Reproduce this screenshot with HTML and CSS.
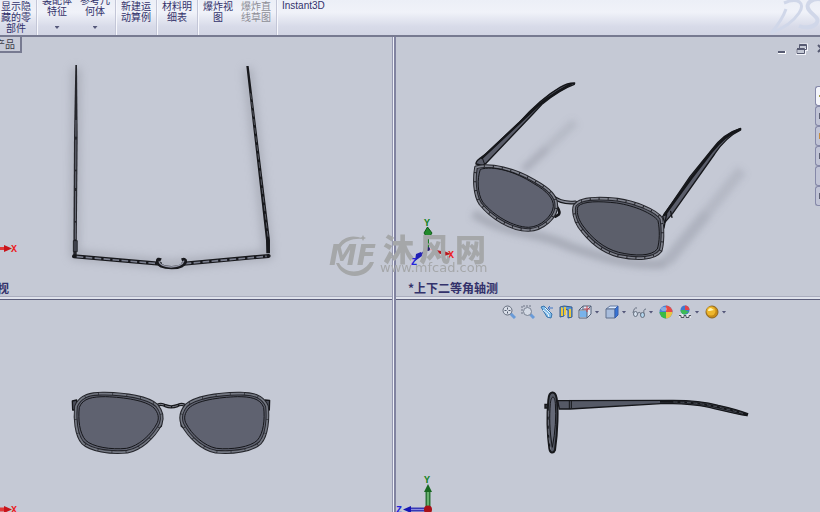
FILE: index.html
```
<!DOCTYPE html>
<html lang="zh-CN">
<head>
<meta charset="utf-8">
<title>装配体</title>
<link rel="stylesheet" href="styles.css">
</head>
<body>
<header class="ribbon">
  <div class="group"><button class="tool">显示隐<br>藏的零<br>部件</button></div>
  <div class="group">
    <button class="tool tall">装配体<br>特征<i class="caret"></i></button>
    <button class="tool tall">参考几<br>何体<i class="caret"></i></button>
  </div>
  <div class="group"><button class="tool">新建运<br>动算例</button></div>
  <div class="group"><button class="tool">材料明<br>细表</button></div>
  <div class="group">
    <button class="tool">爆炸视<br>图</button>
    <button class="tool" disabled>爆炸直<br>线草图</button>
  </div>
  <div class="group"><button class="tool latin">Instant3D</button></div>
  <svg class="brand" viewBox="0 0 50 35" aria-hidden="true">
    <path d="M14 3C28 -3 36 3 29 13C23 22 12 29 1 33C8 25 13 18 16 9" fill="none" stroke="#d0d7e9" stroke-width="3"/>
    <path d="M54 0C43 -3 34 3 39 10C42 15 51 18 46 24C42 28 34 28 29 26" fill="none" stroke="#d0d7e9" stroke-width="4"/>
  </svg>
</header>

<main class="views">
  <section class="view">
    <svg class="model" viewBox="0 37 392 259" aria-hidden="true">
      <defs>
        <filter id="soft" x="-40%" y="-40%" width="180%" height="180%"><feGaussianBlur stdDeviation="14"/></filter>
      </defs>
      <g transform="translate(50 50) scale(.3333)" fill="none">
        <path d="M78 55L74 615L360 645L655 615L593 55" stroke="#8b8f9a" stroke-width="24" opacity=".55" filter="url(#soft)"/>
        <path d="M76 45L81 45L83 260L80 615L70 615L72 260Z" fill="#25262c"/>
        <path d="M78 210L76 570" stroke="#6a6d79" stroke-width="3" stroke-dasharray="50 9 90 5"/>
        <path d="M589 48L596 48L660 570L660 610L649 610L648 570Z" fill="#17181c"/>
        <path d="M602 130L654 560" stroke="#747783" stroke-width="2" stroke-dasharray="18 8"/>
        <path d="M70 572L82 572L82 605L70 605Z" fill="#3f424c" stroke="#15161a" stroke-width="2"/>
        <path d="M72 619L330 641M400 641L656 618" stroke="#17181c" stroke-width="12" stroke-linecap="round"/>
        <path d="M80 620L326 641M404 641L650 619" stroke="#7b7f8e" stroke-width="5" stroke-dasharray="20 7"/>
        <path d="M333 630C318 622 321 640 332 647C350 655 380 655 396 647C408 640 412 624 395 630" stroke="#17181c" stroke-width="10"/>
        <path d="M327 634C330 648 350 650 363 651C383 650 398 647 402 632" stroke="#9295a5" stroke-width="4"/>
      </g>
      <path d="M0 248.500H5" stroke="#e03a3a" stroke-width="3"/>
      <path d="M4 245L12 248.500L4 252Z" fill="#c8141b"/>
      <text x="11" y="252">X</text>
    </svg>
    <div class="doc-tab">产品</div>
    <p class="view-name clipped">视</p>
  </section>

  <section class="view">
    <svg class="model" viewBox="396 37 424 259" aria-hidden="true">
      <defs>
        <filter id="shade" x="-30%" y="-30%" width="160%" height="160%"><feGaussianBlur stdDeviation="10"/></filter>
      </defs>
      <g transform="translate(460 70) scale(.3333)" fill="none" stroke-linejoin="round">
        <g stroke="#8d919d" filter="url(#shade)">
          <path d="M190 300L260 235" stroke-width="24" opacity=".45"/>
          <path d="M260 235L345 155" stroke-width="26" opacity=".25"/>
          <path d="M620 575L740 430" stroke-width="36" opacity=".4"/>
          <path d="M740 430L845 300" stroke-width="34" opacity=".28"/>
          <path d="M40 430C150 500 230 480 330 530C450 570 530 590 620 580" stroke-width="28" opacity=".5"/>
        </g>
        <g stroke-linecap="round">
        <path d="M48 282C45 270 70 260 80 250L175 160C220 110 260 75 300 52Q325 38 344 39L343 43C310 55 280 75 248 101L218 133L78 280L68 286Z" fill="#5a5d6a" stroke="#15161a" stroke-width="4"/>
        <path d="M66 264L205 134Q255 83 332 43" stroke="#15161a" stroke-width="7"/>
        <path d="M67 264L74 283" stroke="#15161a" stroke-width="3"/>
        <path d="M608 440L690 320L755 240Q790 190 842 175L842 180C805 198 780 228 764 252L638 430L614 458Z" fill="#5a5d6a" stroke="#15161a" stroke-width="4"/>
        <path d="M614 434L694 324L754 246Q796 193 838 179" stroke="#15161a" stroke-width="8"/>
        <path d="M632 424L636 442M620 432L612 474" stroke="#15161a" stroke-width="4"/>
        <path d="M292 412Q302 427 296 434L286 440" stroke="#15161a" stroke-width="8"/>
        <path d="M276 378Q305 402 346 397" stroke="#17181c" stroke-width="11"/>
        <path d="M278 380Q307 401 346 397" stroke="#858894" stroke-width="5"/>
        </g>
        <path d="M48 292C90 280 165 298 225 334C270 359 289 380 289 407C290 442 247 479 206 480C155 481 94 443 61 401C43 374 42 327 48 292Z" fill="#5f6270" stroke="#24252b" stroke-width="11"/>
        <path d="M48 292C90 280 165 298 225 334C270 359 289 380 289 407C290 442 247 479 206 480C155 481 94 443 61 401C43 374 42 327 48 292Z" stroke="#80838e" stroke-width="5" stroke-dasharray="24 3"/>
        <path d="M61 298C100 286 167 305 220 340C263 364 281 387 280 409C278 438 242 471 206 472C159 471 101 437 68 396C52 370 51 327 61 298Z" stroke="#15161a" stroke-width="3"/>
        <path d="M344 407C360 383 414 383 472 389C527 397 589 422 604 446C610 478 608 523 602 542C583 568 530 569 474 557C425 544 387 511 358 470C343 447 339 421 344 407Z" fill="#5c5f6b" stroke="#24252b" stroke-width="11"/>
        <path d="M344 407C360 383 414 383 472 389C527 397 589 422 604 446C610 478 608 523 602 542C583 568 530 569 474 557C425 544 387 511 358 470C343 447 339 421 344 407Z" stroke="#80838e" stroke-width="5" stroke-dasharray="24 3"/>
        <path d="M354 409C370 393 417 393 470 399C524 407 579 431 594 452C600 480 599 516 592 537C575 559 526 559 476 547C431 535 396 505 367 465C353 444 349 424 354 409Z" stroke="#15161a" stroke-width="3"/>
      </g>
      <path d="M428 235V249" stroke="#1b7d24" stroke-width="2"/>
      <path d="M427.500 227L432 233L430 236H426L424 233Z" fill="#218a2b" stroke="#0d5916"/>
      <text class="y" x="424" y="226">Y</text>
      <path d="M428 249L420 255" stroke="#3431ad" stroke-width="2"/>
      <path d="M421 252L422 256L415 261L416 254Z" fill="#2020b5"/>
      <text class="z" x="411" y="265">Z</text>
      <path d="M428 249L450 254" stroke="#e5a0a8"/>
      <path d="M436 250L441 251V254L436 253Z" fill="#bb151c"/>
      <path d="M444 251L451 254L444 256Z" fill="#bb151c"/>
      <circle cx="428" cy="249" r="2" fill="#2a216d"/>
      <text class="x" x="448" y="258">X</text>
    </svg>
    <div class="window-buttons">
      <button aria-label="最小化"><svg viewBox="0 0 12 12"><path d="M2 9.500H10" stroke="#fff" stroke-width="3"/><path d="M2 9H9" stroke="#575b72" stroke-width="2"/></svg></button>
      <button aria-label="还原"><svg viewBox="0 0 12 12"><path d="M4 1.500H11.500V7H9M1 6H9V11H1Z" fill="none" stroke="#f3f4fa" stroke-width="2"/><path d="M3.500 5V1.500H10.500V6.500H9M3.500 2.500H10.500M1 5.500H8.500V10.500H1ZM1 6.500H8" fill="none" stroke="#575b72"/></svg></button>
      <button aria-label="关闭"><svg viewBox="0 0 12 12"><path d="M2 2L9 9M9 2L2 9" stroke="#575b72" stroke-width="2"/></svg></button>
    </div>
    <nav class="pane-tabs" aria-label="任务窗格">
      <button class="active" aria-label="资源"></button>
      <button aria-label="设计库"></button>
      <button aria-label="文件"></button>
      <button aria-label="视图调色板"></button>
      <button aria-label="外观"></button>
      <button aria-label="属性"></button>
    </nav>
    <p class="view-name">*上下二等角轴测</p>
  </section>

  <section class="view">
    <svg class="model" viewBox="0 300 392 212" aria-hidden="true">
      <g transform="translate(60 380) scale(.3333)" fill="none" stroke-linejoin="round">
        <path d="M37 63L50 60L50 90L38 90ZM629 61L615 60L616 90L628 90Z" fill="#4c4f5b" stroke="#15161a" stroke-width="4"/>
        <path d="M301 120V137L292 144M367 120V137L376 144" stroke="#17181c" stroke-width="11"/>
        <path d="M294 75Q304 70 316 77Q333 84 352 77Q363 70 374 76" stroke="#17181c" stroke-width="10"/>
        <path d="M294 75Q304 70 316 77Q333 84 352 77Q363 70 374 76" stroke="#7d818c" stroke-width="3" stroke-dasharray="18 4"/>
        <g id="front-lens">
          <path d="M48 79C62 46 93 40 135 41C196 42 266 52 291 77C305 94 309 114 302 132C280 174 239 209 202 215C151 220 91 211 68 188C48 165 44 116 48 79Z" fill="#5f6270" stroke="#24252b" stroke-width="11"/>
          <path d="M48 79C62 46 93 40 135 41C196 42 266 52 291 77C305 94 309 114 302 132C280 174 239 209 202 215C151 220 91 211 68 188C48 165 44 116 48 79Z" stroke="#747883" stroke-width="5" stroke-dasharray="40 2"/>
          <path d="M58 82C69 54 99 50 137 50C193 52 258 61 282 84C295 99 298 113 292 128C273 166 235 198 200 205C153 210 98 201 77 181C58 159 54 118 58 82Z" stroke="#15161a" stroke-width="3"/>
        </g>
        <use href="#front-lens" transform="matrix(-1 0 0 1 669 0)"/>
      </g>
      <path d="M0 509.500H5" stroke="#e03a3a" stroke-width="4"/>
      <path d="M4 506L12 509.500L4 513Z" fill="#c8141b"/>
      <text class="x" x="11" y="513">X</text>
    </svg>
  </section>

  <section class="view">
    <svg class="model" viewBox="396 300 424 212" aria-hidden="true">
      <g transform="translate(530 380) scale(.3333)" fill="none">
        <path d="M83 62L420 61Q505 60 565 76Q620 88 653 101L651 107C600 100 560 85 510 77Q450 70 405 70L120 87H88Z" fill="#555966" stroke="#15161a" stroke-width="4"/>
        <path d="M390 65Q470 63 540 76Q600 88 651 104" stroke="#15161a" stroke-width="7"/>
        <path d="M430 66Q500 67 550 78T645 102" stroke="#686c78" stroke-width="2" stroke-dasharray="12 8"/>
        <path d="M118 61V87M124 63V85" stroke="#15161a" stroke-width="3"/>
        <path d="M45 73H55V84H45Z" fill="#30323b" stroke="#15161a" stroke-width="4"/>
        <path d="M55 60C57 31 76 31 80 55C85 85 83 155 75 210C70 222 60 220 58 205C52 160 51 105 55 60Z" fill="#555965" stroke="#17181c" stroke-width="6"/>
        <path d="M61 70C64 45 74 45 76 70C79 110 76 155 67 202C58 150 58 110 61 70Z" fill="#656977" stroke="#15161a" stroke-width="3"/>
        <path d="M55 92V160L62 209" stroke="#9093a0" stroke-width="2" stroke-dasharray="18 9"/>
      </g>
      <path d="M428 491V508" stroke="#2c7438" stroke-width="5"/>
      <path d="M428 491V508" stroke="#67b06d" stroke-width="2"/>
      <path d="M428 484L432 492H424Z" fill="#176820"/>
      <text class="y" x="424" y="483">Y</text>
      <path d="M410 509.500H425" stroke="#3838b5" stroke-width="4"/>
      <path d="M411 509.500H425" stroke="#8a8ce0"/>
      <path d="M403 509.500L411 506V513Z" fill="#1616b4"/>
      <circle cx="428" cy="509.500" r="4" fill="#a81018"/>
      <text class="z" x="396" y="513">Z</text>
    </svg>
    <div class="heads-up">
      <button aria-label="整屏显示全图"><svg viewBox="0 0 14 14"><path d="M8 8L13 13" stroke="#6a9bd8" stroke-width="3"/><circle cx="5.500" cy="5.500" r="4.500" fill="#d9dee8" stroke="#656d7d"/><path d="M5.500 2.500V8.500M2.500 5.500H8.500" stroke="#4f596b" stroke-dasharray="2 2"/></svg></button>
      <button aria-label="局部放大"><svg viewBox="0 0 14 14"><path d="M1 9V1H10" fill="none" stroke="#6d7585" stroke-dasharray="2 1"/><path d="M9 9L13 13" stroke="#6a9bd8" stroke-width="3"/><circle cx="6.500" cy="6.500" r="4" fill="#d4dae5" stroke="#7b8392"/></svg></button>
      <button aria-label="上一视图"><svg viewBox="0 0 14 14"><path d="M1 2L4 1L12 9L11 13L7 12Z" fill="#82bce9" stroke="#3875ae"/><path d="M3 5L8 9L9 12M5 3L10 8" fill="none" stroke="#f1faff"/><path d="M13 3H8M10 1L8 3L10 5" fill="none" stroke="#3f74c4"/></svg></button>
      <button aria-label="剖面视图"><svg viewBox="0 0 14 14"><path d="M1 2L5 1L13 2V12L9 13V5L5 4V11L1 12Z" fill="#5a96d6" stroke="#365a8b"/><path d="M2 2L4 3V11L2 11ZM10 4H12V12H10Z" fill="#edc83d"/><path d="M6 2V10" stroke="#edc83d" stroke-width="2"/></svg></button>
      <button aria-label="视图定向"><svg viewBox="0 0 14 14"><path d="M1 5L5 1H13V9L9 13H1Z" fill="#dee6f3" stroke="#536078"/><path d="M2 6H9V12H2Z" fill="#79b3eb"/><path d="M1 5H9L13 1M9 5V13M5 1V5" fill="none" stroke="#536078"/><path d="M9 1V7M6 4H12" stroke="#c74953"/></svg><i class="caret"></i></button>
      <button aria-label="显示样式"><svg viewBox="0 0 14 14"><path d="M1 4L5 1H13L10 4Z" fill="#dbeaff" stroke="#65799f"/><path d="M1 4H10V13H1Z" fill="#a9bddc" stroke="#60708d"/><path d="M10 4L13 1V10L10 13Z" fill="#3674d5" stroke="#375eaf"/></svg><i class="caret"></i></button>
      <button aria-label="隐藏/显示项目"><svg viewBox="0 0 14 14"><path d="M1 8Q2 2 5 3M6 8Q8 6 9 9M12 9Q11 4 14 4" fill="none" stroke="#667080"/><ellipse cx="3.500" cy="9" rx="2" ry="2.500" fill="#d7e1ee" stroke="#667080"/><ellipse cx="10.500" cy="10" rx="2" ry="2.500" fill="#b3d5ed" stroke="#667080"/></svg><i class="caret"></i></button>
      <button aria-label="编辑外观"><svg viewBox="0 0 14 14"><circle cx="7" cy="7" r="6.500" fill="#4b82d3"/><path d="M7 7V.5A6.500 6.500 0 0 1 13.500 7Z" fill="#e74a45"/><path d="M7 7H.5A6.500 6.500 0 0 0 7 13.500Z" fill="#3bbb45"/><path d="M7 7H13.500A6.500 6.500 0 0 1 7 13.500Z" fill="#e9c443"/><ellipse cx="5" cy="4" rx="3" ry="2" fill="#fff" opacity=".35"/></svg></button>
      <button aria-label="应用布景"><svg viewBox="0 0 14 14"><path d="M1 10L4 8H10L13 10V13H1Z" fill="#e3e5ea"/><path d="M1 10.500H3V12.500H6V10.500H8V12.500H11V10.500H13" fill="none" stroke="#4c515c"/><circle cx="7" cy="5" r="4.500" fill="#3f79cf"/><path d="M7 5V.5A4.500 4.500 0 0 1 11.500 5Z" fill="#e4434b"/><path d="M7 5H2.500A4.500 4.500 0 0 0 7 9.500L11 7Z" fill="#3dba56"/></svg><i class="caret"></i></button>
      <button aria-label="视图设定"><svg viewBox="0 0 14 14"><circle cx="7" cy="7" r="6" fill="#c78b16" stroke="#8c6620"/><circle cx="6" cy="6" r="4.500" fill="#edb62c"/><path d="M3 6Q3 3 6 3L9 5L5 6Z" fill="#fff4ae"/></svg><i class="caret"></i></button>
    </div>
  </section>

  <div class="watermark">
    <svg class="swoosh" viewBox="0 0 50 42" aria-hidden="true">
      <path d="M7 12C12 2 23 -1 33 4C23 3 15 6 11 12ZM44 27C41 36 33 41 25 41C16 41 9 36 6 28H9C15 39 32 40 40 27Z" fill="#a5a7a9"/>
      <path d="M33 0L34 2L36 3L34 4L33 6L32 4L30 3L32 2Z" fill="#a5a7a9"/>
      <text x="-1" y="30">MF</text>
    </svg>
    <div class="mark-text">
      <div class="mark-name"><span>沐</span><span>风</span><span>网</span></div>
      <div class="mark-url">www.mfcad.com</div>
    </div>
  </div>
</main>
</body>
</html>
```
FILE: styles.css
```
* {
  box-sizing: border-box;
}

body {
  margin: 0;
  height: 100vh;
  display: flex;
  flex-direction: column;
  overflow: hidden;
  background: #c5c9d5;
  color: #33326b;
  font-family: "Noto Sans", "Noto Sans CJK SC", sans-serif;
  font-size: 10px;
}

button {
  margin: 0;
  padding: 0;
  border: 0;
  background: none;
  color: inherit;
  font: inherit;
}

.ribbon {
  flex: none;
  display: flex;
  height: 37px;
  overflow: hidden;
  border-bottom: 2px solid #777a91;
  background: linear-gradient(#eceff7, #f0f2f9 35%, #d8dbe9 75%, #d2d5e4);
}

.group {
  display: flex;
  gap: 8px;
  padding: 0 5px 0 4px;
  border-right: 1px solid #c3c6d7;
  box-shadow: 1px 0 #f7f8fd;
}

.group + .group {
  padding-left: 5px;
}

.group:first-child {
  padding-left: 1px;
}

.group:last-of-type {
  border-right: 0;
  box-shadow: none;
}

.tool {
  align-self: flex-start;
  min-width: 30px;
  font-family: "Noto Sans CJK SC", sans-serif;
  line-height: 11px;
  text-align: center;
  white-space: nowrap;
}

.tool.tall {
  margin-top: -6px;
}

.tool.latin {
  font-family: "Liberation Sans", sans-serif;
}

.tool:disabled {
  color: #8d8e96;
}

.caret {
  display: block;
  width: 5px;
  height: 3px;
  background: #55587a;
  clip-path: polygon(0 0, 100% 0, 50% 100%);
}

.tall .caret {
  margin: 10px auto 0;
}

.brand {
  width: 50px;
  height: 35px;
  margin-left: auto;
}

.views {
  position: relative;
  flex: 1;
  min-height: 0;
  display: grid;
  grid-template-columns: 392fr 428fr;
  grid-template-rows: 259fr 216fr;
}

.view {
  position: relative;
  display: flex;
  flex-direction: column;
  min-width: 0;
  min-height: 0;
  overflow: hidden;
}

.view:nth-child(even) {
  border-left: 4px solid #8486a2;
  border-image: linear-gradient(90deg, #9496b0 1px, #eef0f8 1px 2px, #8183a0 2px) 0 0 0 4;
}

.view:nth-child(n + 3) {
  padding-top: 4px;
  background: linear-gradient(#a9acbd 1px, #dfe2ec 1px 3px, #5c5e7b 3px 4px, transparent 4px);
}

.model {
  position: absolute;
  inset: 0;
  width: 100%;
  height: 100%;
}

.view:nth-child(n + 3) .model {
  top: 4px;
  height: calc(100% - 4px);
}

.model text {
  fill: #ed1c24;
  font: bold 10px "Liberation Mono", monospace;
}

.model .y {
  fill: #158323;
}

.model .z {
  fill: #2424dc;
}

.doc-tab {
  position: relative;
  display: flex;
  justify-content: flex-end;
  width: 22px;
  height: 16px;
  padding-right: 5px;
  overflow: hidden;
  border: solid #777a91;
  border-width: 0 2px 2px 0;
  background: #c8cbd8;
  color: #3c3d49;
  line-height: 14px;
  white-space: nowrap;
}

.view-name {
  position: relative;
  margin: auto 0 0 12px;
  font-family: "Noto Sans CJK SC", sans-serif;
  font-size: 12px;
  font-weight: bold;
  line-height: 16px;
}

.view-name.clipped {
  margin-left: -3px;
}

.window-buttons {
  position: relative;
  display: flex;
  justify-content: flex-end;
  gap: 8px;
  margin-right: -8px;
  padding-top: 6px;
}

.window-buttons svg {
  display: block;
  width: 12px;
  height: 12px;
}

.pane-tabs {
  position: absolute;
  top: 49px;
  right: 0;
  width: 5px;
}

.pane-tabs button {
  display: block;
  width: 5px;
  height: 20px;
  border: solid #8588a8;
  border-width: 1px 0 1px 1px;
  border-radius: 3px 0 0 3px;
  background: linear-gradient(#5d6073, #5d6073) right / 1px 6px no-repeat #c1c4d6;
}

.pane-tabs .active {
  background-color: #f3f4fa;
  background-image: linear-gradient(#a39a4a, #a39a4a);
  background-size: 1px 2px;
}

.pane-tabs button:nth-child(3) {
  background-image: linear-gradient(#c58b41, #c58b41);
}

.pane-tabs button:nth-child(5) {
  background-image: none;
}

.heads-up {
  position: relative;
  display: flex;
  justify-content: center;
  gap: 5px;
  padding: 5px 0 0 12px;
}

.heads-up button {
  display: flex;
  align-items: center;
  gap: 3px;
}

.heads-up svg {
  width: 14px;
  height: 14px;
}

.watermark {
  position: absolute;
  top: 198px;
  left: 330px;
  display: flex;
  color: #a5a7a9;
  pointer-events: none;
}

.swoosh {
  width: 50px;
  height: 42px;
  overflow: visible;
}

.swoosh text {
  fill: #a5a7a9;
  font: italic bold 28px "DejaVu Sans", sans-serif;
}

.mark-name {
  display: flex;
  gap: 5px;
  padding-left: 3px;
  font: 900 31px/26px "Noto Sans CJK SC", sans-serif;
}

.mark-url {
  font: 13px/14px "DejaVu Sans", sans-serif;
}
```
